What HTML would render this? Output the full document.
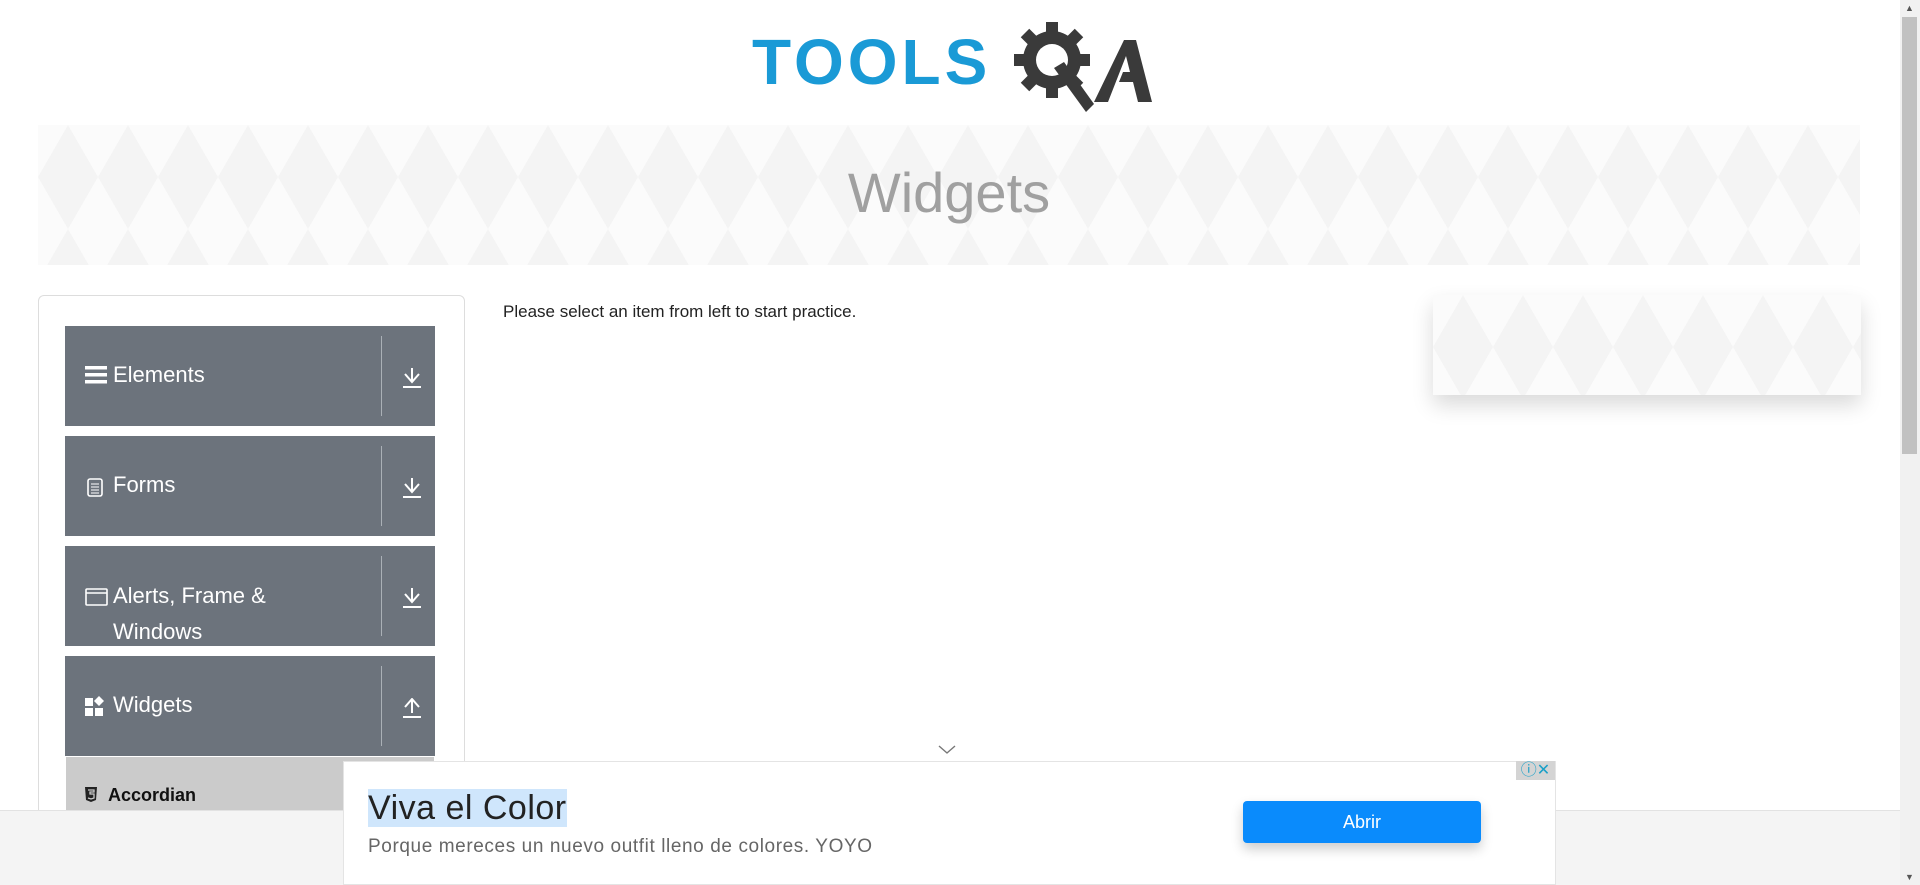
<!DOCTYPE html>
<html><head><meta charset="utf-8"><style>
*{box-sizing:border-box;margin:0;padding:0}
html,body{width:1920px;height:885px;overflow:hidden}
body{background:#fff;font-family:"Liberation Sans",sans-serif;position:relative}
.abs{position:absolute}
.btn{position:absolute;left:65px;width:370px;height:100px;background:#6c737c;color:#fff;font-size:22px}
.btn .t{position:absolute;left:48px;top:36px}
.btn .ic{position:absolute;left:20px;top:38px}
.btn .sep{position:absolute;left:316px;top:10px;width:1px;height:80px;background:#aab0b6}
.btn .ar{position:absolute;left:337px;top:42px}
.tri{background-color:#f4f4f4;background-image:linear-gradient(60deg,rgba(255,255,255,.6) 25%,transparent 25%,transparent 75%,rgba(255,255,255,.6) 75%),linear-gradient(-60deg,rgba(255,255,255,.6) 25%,transparent 25%,transparent 75%,rgba(255,255,255,.6) 75%);background-size:60px 104px}
</style></head><body>
<!-- logo -->
<div class="abs" style="left:752px;top:20px;width:400px;height:95px">
<div class="abs" style="left:0;top:12px;font-size:64px;font-weight:bold;color:#1a9ad6;letter-spacing:4px;line-height:60px">TOOLS</div>
<svg class="abs" style="left:250px;top:0" width="150" height="95" viewBox="0 0 150 95">
<g fill="#3a3a3a"><circle cx="50" cy="40" r="29"/>
<g stroke="#3a3a3a" stroke-width="12"><line x1="50" y1="2" x2="50" y2="78"/><line x1="12" y1="40" x2="88" y2="40"/><line x1="23" y1="13" x2="77" y2="67"/><line x1="77" y1="13" x2="23" y2="67"/></g>
<circle cx="50" cy="40" r="16" fill="#fff"/>
<polygon points="52,48 62,42 92,84 84,92"/>
<polygon points="122,20 134,20 150,82 136,82 131,62 117,62 121,52 128,52 124,36 106,82 92,82"/></g></svg>
</div>
<!-- banner -->
<div class="abs tri" style="left:38px;top:125px;width:1822px;height:140px"></div>
<div class="abs" style="left:0;width:1898px;top:160px;text-align:center;font-size:56px;color:#a0a0a0;font-weight:300">Widgets</div>
<!-- card -->
<div class="abs" style="left:38px;top:295px;width:427px;height:560px;border:1px solid #ddd;border-radius:6px"></div>
<div class="btn" style="top:326px"><svg class="ic" width="22" height="20"><rect x="0" y="2" width="22" height="3.5" fill="#fff"/><rect x="0" y="9" width="22" height="3.5" fill="#fff"/><rect x="0" y="16" width="22" height="3.5" fill="#fff"/></svg><span class="t">Elements</span><div class="sep"></div><svg class="ar" width="20" height="22"><path d="M3 6l7 8 7-8M10 14V0M1 19h18" stroke="#fff" stroke-width="2" fill="none"/></svg></div>
<div class="btn" style="top:436px"><svg class="ic" width="18" height="20" style="left:22px;top:42px"><rect x="1" y="1" width="14" height="17" rx="2" stroke="#fff" stroke-width="1.6" fill="none"/><path d="M4 6h8M4 9h8M4 12h8M4 15h8" stroke="#fff"/></svg><span class="t">Forms</span><div class="sep"></div><svg class="ar" width="20" height="22"><path d="M3 6l7 8 7-8M10 14V0M1 19h18" stroke="#fff" stroke-width="2" fill="none"/></svg></div>
<div class="btn" style="top:546px"><svg class="ic" width="24" height="20" style="top:42px"><rect x="1" y="1" width="21" height="16" rx="1" stroke="#fff" stroke-width="1.6" fill="none"/><path d="M1 5h21" stroke="#fff" stroke-width="1.6"/></svg><span class="t" style="top:32px;line-height:36px">Alerts, Frame &amp;<br>Windows</span><div class="sep"></div><svg class="ar" width="20" height="22"><path d="M3 6l7 8 7-8M10 14V0M1 19h18" stroke="#fff" stroke-width="2" fill="none"/></svg></div>
<div class="btn" style="top:656px"><svg class="ic" width="22" height="22" style="top:40px"><rect x="0" y="2" width="8" height="8" fill="#fff"/><rect x="0" y="12" width="8" height="8" fill="#fff"/><rect x="10" y="12" width="8" height="8" fill="#fff"/><polygon points="14,0 19,5 14,10 9,5" fill="#fff"/></svg><span class="t">Widgets</span><div class="sep"></div><svg class="ar" width="20" height="22"><path d="M3 9l7-8 7 8M10 1v14M1 19h18" stroke="#fff" stroke-width="2" fill="none"/></svg></div>
<div class="abs" style="left:66px;top:757px;width:368px;height:60px;background:#cbcbcb"></div>
<svg class="abs" style="left:84px;top:787px" width="14" height="16"><path d="M1 0h12l-1 13-5 2-5-2z" fill="#222"/><path d="M4 3h6v2H6v2h4v4l-3 1-3-1" stroke="#cbcbcb" stroke-width="1.3" fill="none"/></svg>
<div class="abs" style="left:108px;top:785px;font-size:18px;font-weight:bold;color:#111">Accordian</div>
<!-- main -->
<div class="abs" style="left:503px;top:302px;font-size:17px;color:#222">Please select an item from left to start practice.</div>
<div class="abs tri" style="left:1433px;top:295px;width:428px;height:100px;box-shadow:0 10px 20px rgba(0,0,0,.15)"></div>
<!-- footer band -->
<div class="abs" style="left:0;top:810px;width:1900px;height:75px;background:#f4f4f4;border-top:1px solid #e2e2e2"></div>
<svg class="abs" style="left:938px;top:745px" width="18" height="10"><path d="M1 1l8 7 8-7" stroke="#777" stroke-width="1.4" fill="none"/></svg>
<!-- ad -->
<div class="abs" style="left:343px;top:761px;width:1213px;height:124px;background:#fff;border:1px solid #e4e4e4"></div>
<div class="abs" style="left:1516px;top:761px;width:39px;height:19px;background:#d4d4d4;color:#1aa0c8;font-size:16px;line-height:19px;text-align:center">ⓘ✕</div>
<div class="abs" style="left:368px;top:789px;font-size:34px;color:#222;background:#cfe6fc;line-height:38px;letter-spacing:0.5px">Viva el Color</div>
<div class="abs" style="left:368px;top:836px;font-size:19px;color:#666;letter-spacing:0.6px">Porque mereces un nuevo outfit lleno de colores. YOYO</div>
<div class="abs" style="left:1243px;top:801px;width:238px;height:42px;background:#0a8bfc;border-radius:4px;color:#fff;font-size:18px;text-align:center;line-height:42px;box-shadow:0 6px 12px rgba(0,0,0,.2)">Abrir</div>
<!-- scrollbar -->
<div class="abs" style="left:1900px;top:0;width:20px;height:885px;background:#f1f1f1"></div>
<div class="abs" style="left:1902px;top:17px;width:15px;height:437px;background:#c1c1c1"></div>
<div class="abs" style="left:1905px;top:3px;font-size:9px;color:#555">▲</div>
<div class="abs" style="left:1905px;top:872px;font-size:9px;color:#555">▼</div>
</body></html>
